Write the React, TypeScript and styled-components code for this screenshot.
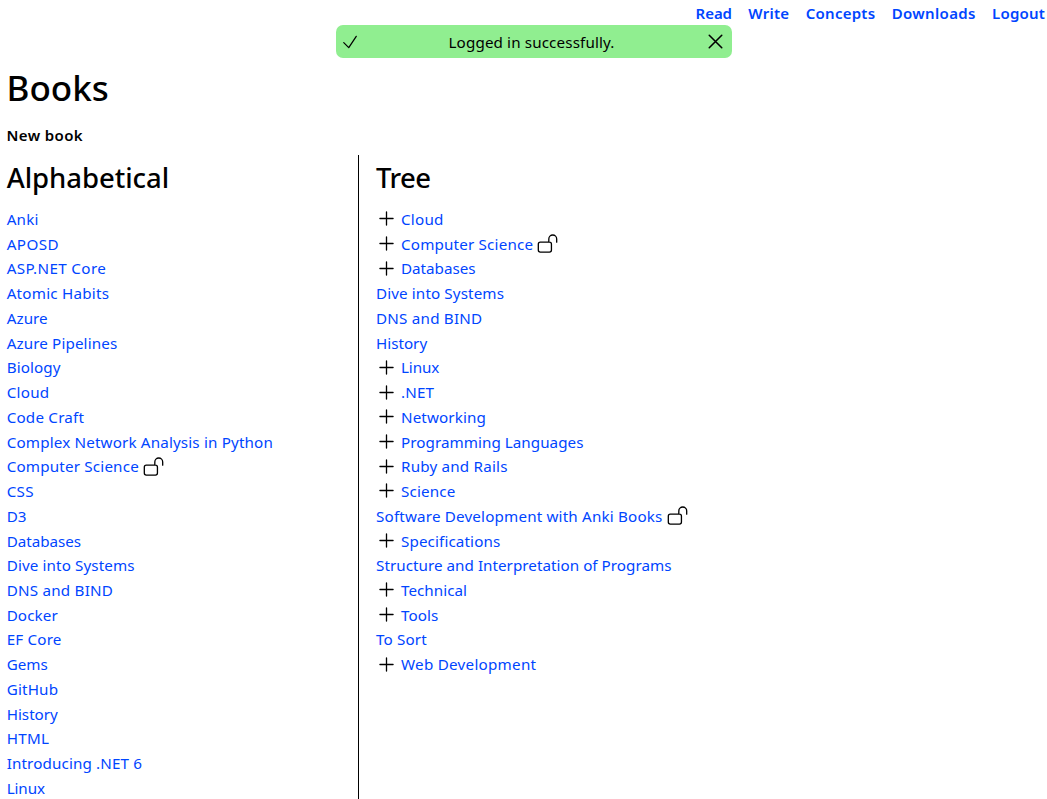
import React from "react";
import styled, { createGlobalStyle } from "styled-components";

const GlobalStyle = createGlobalStyle`
  * { box-sizing: border-box; }
  html { overflow: hidden; }
  body {
    margin: 0;
    height: 799px;
    overflow: hidden;
    background: #fff;
    color: #000;
    font-family: "Noto Sans", "Open Sans", sans-serif;
    font-size: 15.2px;
    line-height: 24.74px;
  }
`;

const Page = styled.div`
  display: flex;
  flex-direction: column;
  height: 799px;
  overflow: hidden;
`;

const Nav = styled.nav`
  display: flex;
  justify-content: flex-end;
  gap: 16.3px;
  height: 25px;
  padding: 1px 2px 0 0;
`;

const NavLink = styled.a<{ $spacing?: number }>`
  color: #0045ff;
  font-weight: 600;
  font-size: 15px;
  letter-spacing: ${(p) => p.$spacing ?? 0}px;
  white-space: nowrap;
`;

const Notice = styled.div`
  display: flex;
  align-items: center;
  justify-content: space-between;
  flex: none;
  width: 396px;
  height: 33px;
  margin-left: 336px;
  padding: 0 4px;
  border-radius: 7px;
  background: #90ee90;
`;

const NoticeText = styled.span`
  padding-top: 2px;
  letter-spacing: 0.13px;
`;

const Title = styled.h1`
  margin: 8px 0 0 6.5px;
  font-size: 35px;
  line-height: 43px;
  font-weight: 500;
`;

const NewBook = styled.a`
  margin: 14px 0 0 6.5px;
  font-weight: 600;
  font-size: 15px;
  line-height: 24px;
  letter-spacing: 0.38px;
`;

const Columns = styled.main`
  display: flex;
  margin-top: 8px;
  flex: 1;
`;

const Column = styled.section<{ $divided?: boolean }>`
  width: ${(p) => (p.$divided ? "359px" : "auto")};
  padding-left: ${(p) => (p.$divided ? "6.7px" : "17px")};
  border-right: ${(p) => (p.$divided ? "1px solid #000" : "0")};
`;

const Heading = styled.h2<{ $spacing?: number }>`
  margin: 6px 0 13px;
  font-size: 27.5px;
  line-height: 33px;
  font-weight: 500;
  letter-spacing: ${(p) => p.$spacing ?? 0}px;
`;

const List = styled.ul`
  margin: 0;
  padding: 0;
  list-style: none;
`;

const Row = styled.li`
  display: flex;
  align-items: center;
  gap: 4px;
  height: 24.74px;
  white-space: nowrap;

  svg {
    margin-bottom: 1px;
  }
`;

const BookLink = styled.a<{ $spacing?: number }>`
  color: #0045ff;
  letter-spacing: ${(p) => p.$spacing ?? 0}px;
`;

const Glyph = styled.svg`
  display: block;
  flex: none;
  fill: none;
  stroke: #000;
  stroke-width: 1.5;
  stroke-linecap: round;
  stroke-linejoin: round;
`;

const paths = {
  check: "M4.5 12.75l6 6 9-13.5",
  close: "M6 18L18 6M6 6l12 12",
  plus: "M12 4.5v15m7.5-7.5h-15",
  unlocked:
    "M13.5 10.5V6.75a4.5 4.5 0 119 0v3.75M3.75 21.75h10.5a2.25 2.25 0 002.25-2.25v-6.75a2.25 2.25 0 00-2.25-2.25H3.75a2.25 2.25 0 00-2.25 2.25v6.75a2.25 2.25 0 002.25 2.25z",
};

function Icon({ name, size }: { name: keyof typeof paths; size: number }) {
  return (
    <Glyph width={size} height={size} viewBox="0 0 24 24">
      <path d={paths[name]} />
    </Glyph>
  );
}

type Book = { title: string; spacing?: number; branch?: boolean; open?: boolean };

const alphabetical: Book[] = [
  { title: "Anki", spacing: 0.2 },
  { title: "APOSD", spacing: 0.45 },
  { title: "ASP.NET Core", spacing: 0.37 },
  { title: "Atomic Habits", spacing: 0.23 },
  { title: "Azure", spacing: 0.05 },
  { title: "Azure Pipelines", spacing: 0.12 },
  { title: "Biology", spacing: 0.1 },
  { title: "Cloud", spacing: 0.25 },
  { title: "Code Craft", spacing: 0.2 },
  { title: "Complex Network Analysis in Python", spacing: 0.16 },
  { title: "Computer Science", spacing: 0.18, open: true },
  { title: "CSS", spacing: 0.3 },
  { title: "D3", spacing: 0.1 },
  { title: "Databases", spacing: -0.02 },
  { title: "Dive into Systems", spacing: 0.12 },
  { title: "DNS and BIND", spacing: 0.22 },
  { title: "Docker", spacing: 0.1 },
  { title: "EF Core", spacing: 0.18 },
  { title: "Gems", spacing: 0 },
  { title: "GitHub", spacing: 0.17 },
  { title: "History", spacing: 0 },
  { title: "HTML", spacing: 0.3 },
  { title: "Introducing .NET 6", spacing: 0.13 },
  { title: "Linux", spacing: -0.1 },
];

const tree: Book[] = [
  { title: "Cloud", spacing: 0.25, branch: true },
  { title: "Computer Science", spacing: 0.18, branch: true, open: true },
  { title: "Databases", branch: true },
  { title: "Dive into Systems", spacing: 0.12 },
  { title: "DNS and BIND", spacing: 0.22 },
  { title: "History" },
  { title: "Linux", spacing: -0.1, branch: true },
  { title: ".NET", spacing: 0.15, branch: true },
  { title: "Networking", spacing: 0.12, branch: true },
  { title: "Programming Languages", spacing: 0.05, branch: true },
  { title: "Ruby and Rails", spacing: 0.2, branch: true },
  { title: "Science", spacing: 0.15, branch: true },
  { title: "Software Development with Anki Books", spacing: 0.175, open: true },
  { title: "Specifications", spacing: 0.12, branch: true },
  { title: "Structure and Interpretation of Programs", spacing: 0.04 },
  { title: "Technical", spacing: 0.04, branch: true },
  { title: "Tools", spacing: 0.1, branch: true },
  { title: "To Sort", spacing: 0.15 },
  { title: "Web Development", spacing: 0.26, branch: true },
];

function BookList({ books }: { books: Book[] }) {
  return (
    <List>
      {books.map((b) => (
        <Row key={b.title}>
          {b.branch && <Icon name="plus" size={21} />}
          <BookLink $spacing={b.spacing}>{b.title}</BookLink>
          {b.open && <Icon name="unlocked" size={21} />}
        </Row>
      ))}
    </List>
  );
}

export default function App() {
  return (
    <Page>
      <GlobalStyle />
      <Nav>
        <NavLink $spacing={-0.05}>Read</NavLink>
        <NavLink $spacing={0.28}>Write</NavLink>
        <NavLink $spacing={0.26}>Concepts</NavLink>
        <NavLink $spacing={0.34}>Downloads</NavLink>
        <NavLink $spacing={0.2}>Logout</NavLink>
      </Nav>
      <Notice>
        <Icon name="check" size={20} />
        <NoticeText>Logged in successfully.</NoticeText>
        <Icon name="close" size={25} />
      </Notice>
      <Title>Books</Title>
      <NewBook>New book</NewBook>
      <Columns>
        <Column $divided>
          <Heading $spacing={-0.04}>Alphabetical</Heading>
          <BookList books={alphabetical} />
        </Column>
        <Column>
          <Heading $spacing={-0.55}>Tree</Heading>
          <BookList books={tree} />
        </Column>
      </Columns>
    </Page>
  );
}
